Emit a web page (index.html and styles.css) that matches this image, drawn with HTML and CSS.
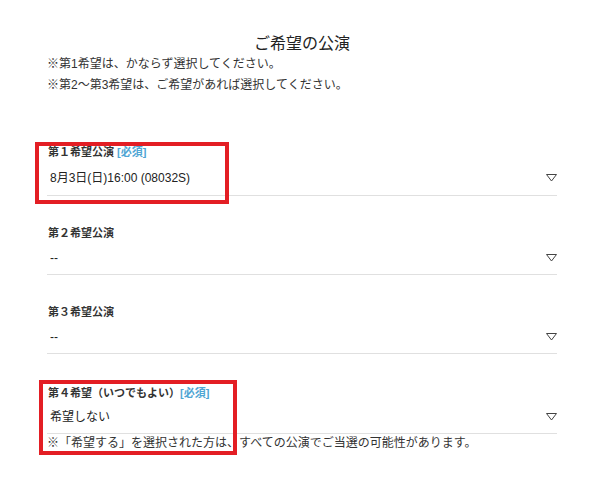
FILE: index.html
```html
<html>
    <head>
        <meta charset="UTF-8">
        <link rel="stylesheet" href="styles.css">
    </head>

    <body>
        <div class="container">
            <h2 class="title">ご希望の公演</h2>
            <p class="note">※第1希望は、かならず選択してください。</p>
            <p class="note">※第2〜第3希望は、ご希望があれば選択してください。</p>

            <div class="field first">
                <label class="label">第１希望公演 <span class="required">[必須]</span></label>
                <div class="select-row">
                    <select class="select">
                        <option>8月3日(日)16:00 (08032S)</option>
                    </select>
                    <svg class="arrow" width="11" height="8" viewBox="0 0 11 8"><polygon points="0.5,0.5 10.5,0.5 5.5,7" fill="none" stroke="#444" stroke-width="1"/></svg>
                </div>
                <div class="highlight"></div>
            </div>

            <div class="field">
                <label class="label">第２希望公演</label>
                <div class="select-row">
                    <select class="select">
                        <option>--</option>
                    </select>
                    <svg class="arrow" width="11" height="8" viewBox="0 0 11 8"><polygon points="0.5,0.5 10.5,0.5 5.5,7" fill="none" stroke="#444" stroke-width="1"/></svg>
                </div>
            </div>

            <div class="field">
                <label class="label">第３希望公演</label>
                <div class="select-row">
                    <select class="select">
                        <option>--</option>
                    </select>
                    <svg class="arrow" width="11" height="8" viewBox="0 0 11 8"><polygon points="0.5,0.5 10.5,0.5 5.5,7" fill="none" stroke="#444" stroke-width="1"/></svg>
                </div>
            </div>

            <div class="field fourth">
                <label class="label">第４希望（いつでもよい）<span class="required">[必須]</span></label>
                <div class="select-row">
                    <select class="select">
                        <option>希望しない</option>
                    </select>
                    <svg class="arrow" width="11" height="8" viewBox="0 0 11 8"><polygon points="0.5,0.5 10.5,0.5 5.5,7" fill="none" stroke="#444" stroke-width="1"/></svg>
                </div>
                <p class="field-note">※「希望する」を選択された方は、すべての公演でご当選の可能性があります。</p>
                <div class="highlight"></div>
            </div>
        </div>
    </body>
</html>
```

FILE: styles.css
```css
body {
    margin: 0;
    background: #fff;
    color: #222;
    font-family: "Liberation Sans", "Noto Sans CJK JP", sans-serif;
}

.container {
    width: 510px;
    margin-left: 47px;
    padding-top: 34px;
}

.title {
    margin: 0;
    height: 20px;
    text-align: center;
    font-size: 16px;
    font-weight: normal;
    line-height: 20px;
    color: #222;
}

.note {
    margin: 0;
    height: 21px;
    font-size: 12px;
    line-height: 21px;
    color: #333;
}

.field {
    position: relative;
    margin-top: 29px;
}

.field.first {
    margin-top: 48px;
}

.field.fourth {
    margin-top: 31px;
}

.label {
    display: block;
    height: 16px;
    padding-left: 1px;
    font-size: 11px;
    font-weight: bold;
    line-height: 17px;
    color: #333;
}

.required {
    color: #4fa6d4;
}

.select-row {
    display: flex;
    align-items: center;
    height: 33px;
    border-bottom: 1px solid #e0e0e0;
}

.first .select-row {
    height: 35px;
}

.fourth .select-row {
    height: 32px;
}

.select {
    flex: 1;
    height: 100%;
    padding: 0 0 0 3px;
    border: none;
    background: transparent;
    font-family: "Liberation Sans", "Noto Sans CJK JP", sans-serif;
    font-size: 12px;
    color: #222;
    appearance: none;
    -webkit-appearance: none;
    outline: none;
}

.arrow {
    flex: none;
}

.field-note {
    margin: 0;
    font-size: 12px;
    line-height: 18px;
    color: #333;
}

.highlight {
    position: absolute;
    border: 4px solid #e31e24;
    pointer-events: none;
}

.first .highlight {
    left: -12px;
    top: -2px;
    width: 186px;
    height: 54px;
}

.fourth .highlight {
    left: -8px;
    top: -5px;
    width: 190px;
    height: 67px;
}
```
